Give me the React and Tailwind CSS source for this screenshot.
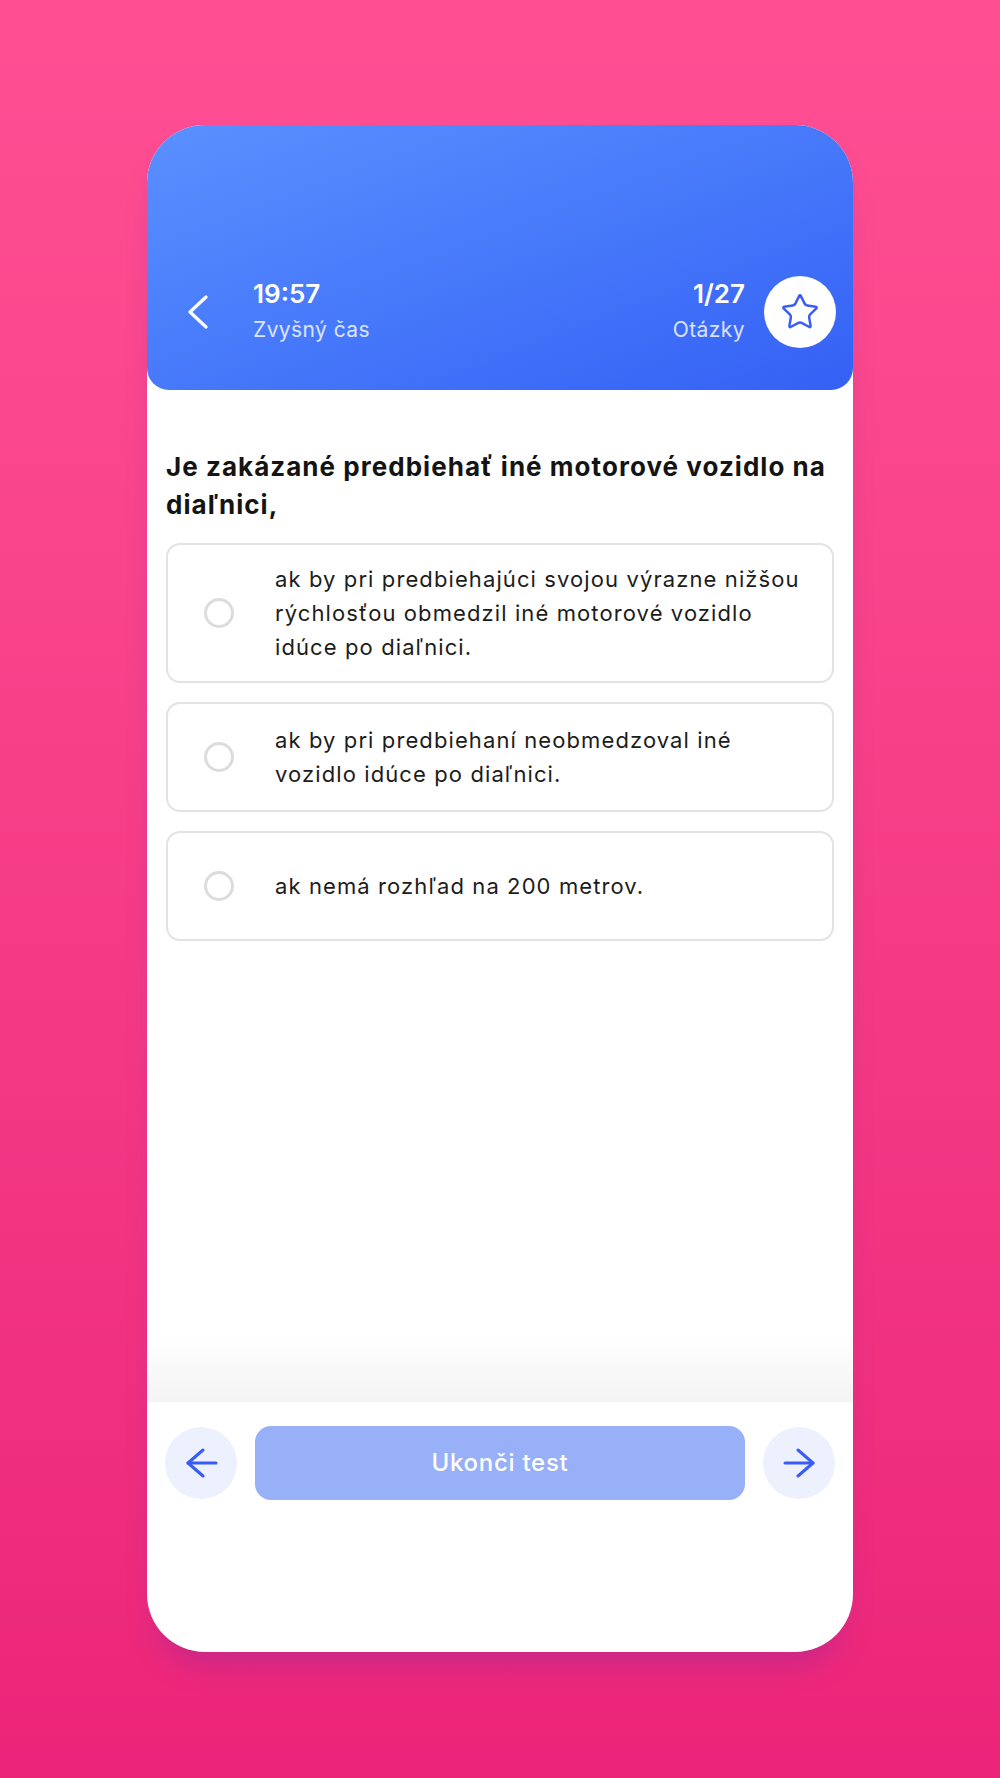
import React, { useState } from 'react';
import { Star } from 'lucide-react';

const OTAZKA = 'Je zakázané predbiehať iné motorové vozidlo na diaľnici,';

const ODPOVEDE = [
  'ak by pri predbiehajúci svojou výrazne nižšou rýchlosťou obmedzil iné motorové vozidlo idúce po diaľnici.',
  'ak by pri predbiehaní neobmedzoval iné vozidlo idúce po diaľnici.',
  'ak nemá rozhľad na 200 metrov.',
];

function Sipka({ doprava = false }) {
  return (
    <svg width="33" height="30" viewBox="0 0 33 30" fill="none" className={doprava ? 'rotate-180' : ''}>
      <path d="M3 15H31" stroke="#3a5cf5" strokeWidth="3" strokeLinecap="round" />
      <path d="M18 2L3 15L18 28" stroke="#3a5cf5" strokeWidth="3" strokeLinecap="round" strokeLinejoin="round" />
    </svg>
  );
}

export default function App() {
  const [vybrana, setVybrana] = useState(null);

  return (
    <div
      className="min-h-screen w-full flex justify-center pt-[125px] bg-gradient-to-b from-[#ff4f93] to-[#ec2479]"
      style={{ fontFamily: 'Inter, "Open Sans", sans-serif' }}
    >
      <div className="w-[706px] h-[1527px] bg-white rounded-[58px] overflow-hidden flex flex-col shadow-[0_22px_30px_-12px_rgba(120,40,170,0.35)]">
        {/* hlavička */}
        <header className="h-[265px] shrink-0 flex items-end pb-[42px] pl-[39px] pr-[17px] rounded-b-[22px] bg-gradient-to-br from-[#5b90ff] to-[#3560f5]">
          <div className="flex items-center w-full h-[72px]">
            <svg width="24" height="34" viewBox="0 0 24 34" fill="none">
              <path d="M20 2L4 17L20 32" stroke="white" strokeWidth="3.2" strokeLinecap="round" strokeLinejoin="round" />
            </svg>
            <div className="ml-[43px] flex flex-col">
              <span className="text-white font-semibold text-[26px] leading-[36px]">19:57</span>
              <span className="text-white/80 text-[21px] tracking-[0.02em] leading-[36px]">Zvyšný čas</span>
            </div>
            <div className="ml-auto flex flex-col items-end">
              <span className="text-white font-semibold text-[26px] leading-[36px]">1/27</span>
              <span className="text-white/80 text-[21px] tracking-[0.02em] leading-[36px]">Otázky</span>
            </div>
            <button className="ml-[19px] w-[72px] h-[72px] rounded-full bg-white flex items-center justify-center">
              <Star size={40} strokeWidth={1.5} color="#3a5ef5" />
            </button>
          </div>
        </header>

        {/* otázka a odpovede */}
        <main className="flex-1 px-[19px] pt-[58px]">
          <h1 className="text-[#141414] font-bold text-[26px] tracking-[0.04em] leading-[38px]">{OTAZKA}</h1>
          <div className="mt-[19px] flex flex-col gap-[19px]">
            {ODPOVEDE.map((text, idx) => (
              <button
                key={idx}
                onClick={() => setVybrana(idx)}
                className="min-h-[110px] flex items-center text-left border-2 border-[#e3e3e3] rounded-[14px] py-[17px] pl-[36px] pr-[20px] bg-white"
              >
                <span
                  className={`w-[30px] h-[30px] shrink-0 rounded-full border-[3px] ${
                    vybrana === idx ? 'border-[#3a5cf5]' : 'border-[#dcdcdc]'
                  }`}
                />
                <span className="ml-[41px] text-[#1c1c1c] text-[22px] tracking-[0.05em] leading-[34px]">{text}</span>
              </button>
            ))}
          </div>
        </main>

        {/* spodná lišta */}
        <div className="h-[70px] shrink-0 bg-gradient-to-b from-white to-[#f4f4f4]" />
        <div className="shrink-0 flex items-center gap-[18px] px-[18px] pt-[24px]">
          <button className="w-[72px] h-[72px] rounded-full bg-[#ecf1fd] flex items-center justify-center">
            <Sipka />
          </button>
          <button className="flex-1 h-[74px] rounded-[16px] bg-[#98b0f8] text-white font-medium text-[24px] tracking-[0.03em]">
            Ukonči test
          </button>
          <button className="w-[72px] h-[72px] rounded-full bg-[#ecf1fd] flex items-center justify-center">
            <Sipka doprava />
          </button>
        </div>
        <div className="h-[152px] shrink-0" />
      </div>
    </div>
  );
}
